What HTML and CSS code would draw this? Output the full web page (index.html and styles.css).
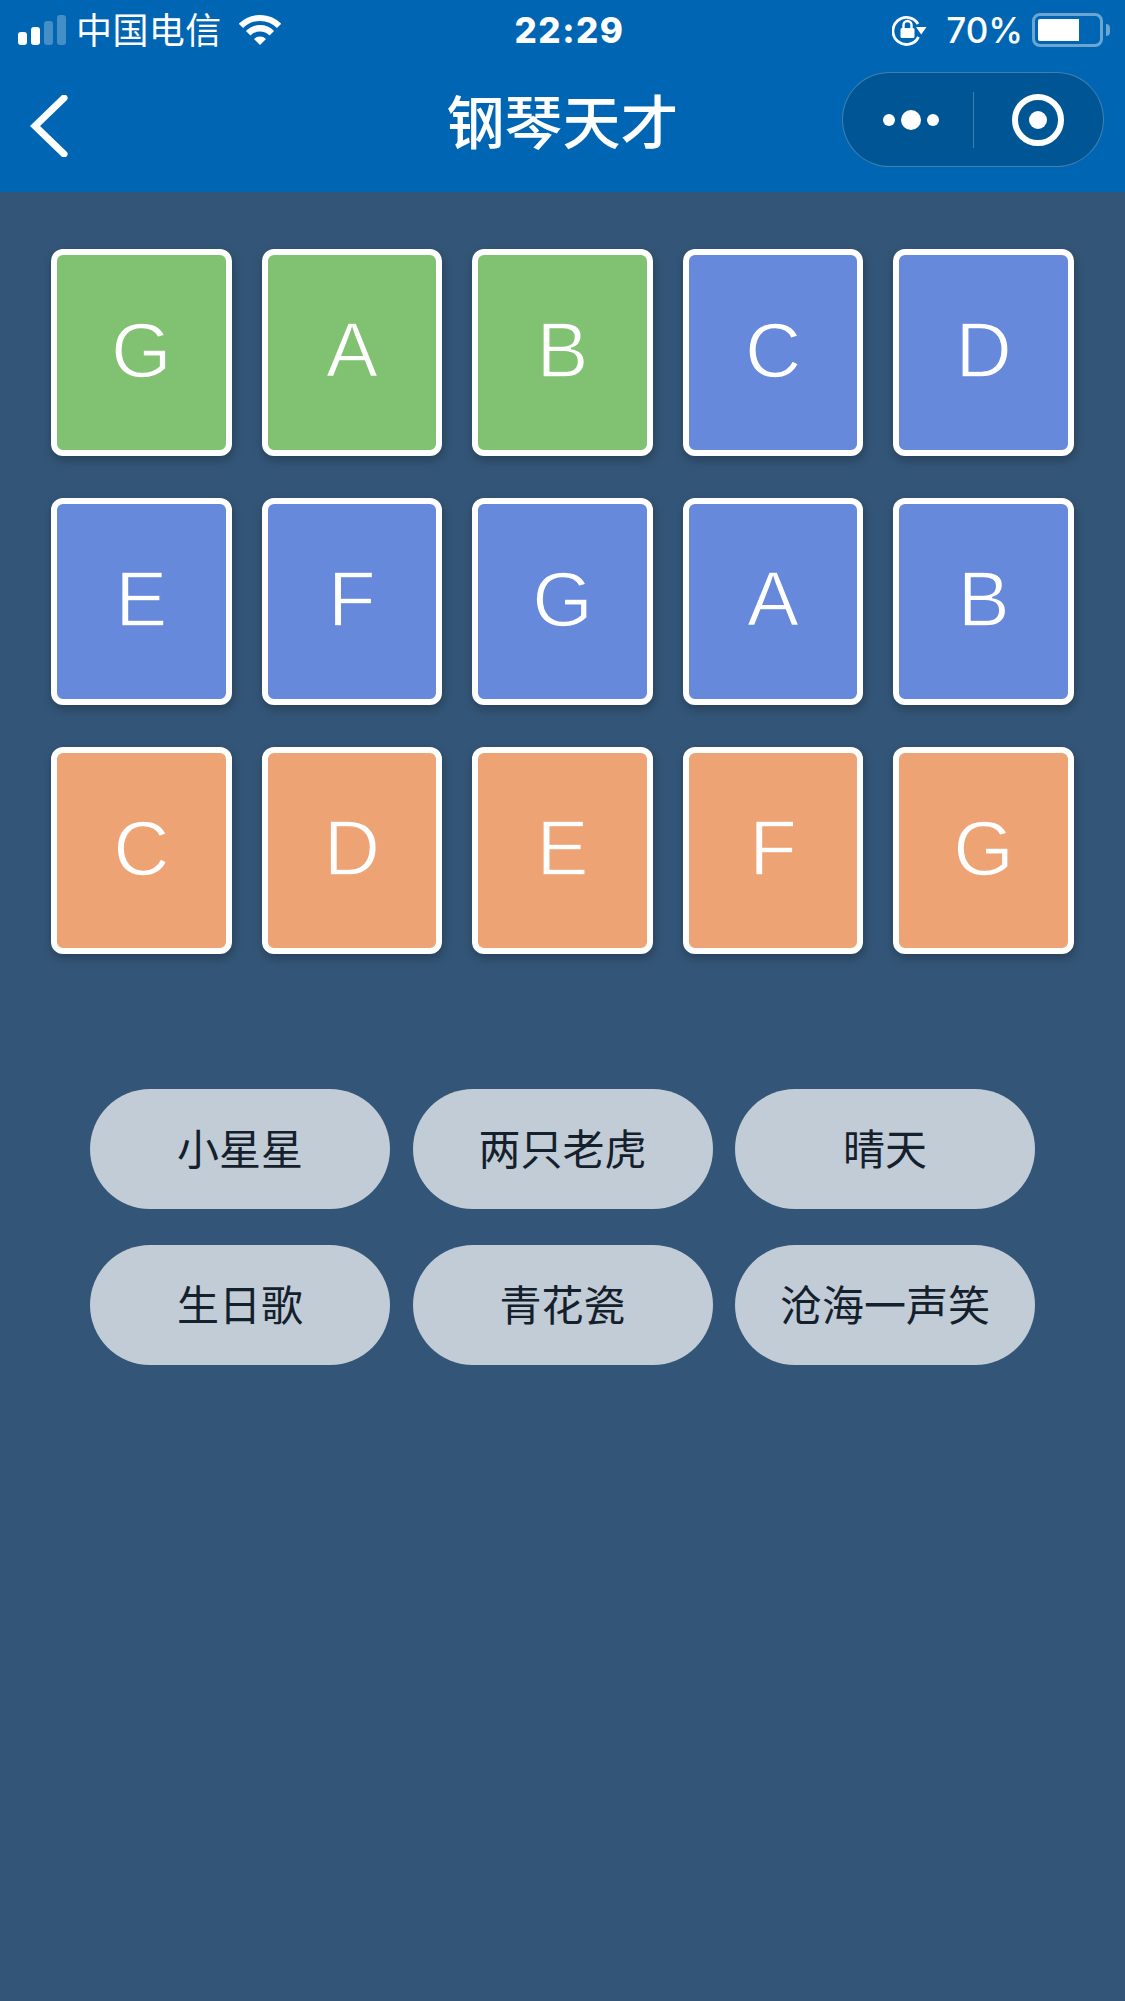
FILE: index.html
```html
<!DOCTYPE html>
<html lang="zh">
<head>
<meta charset="utf-8">
<title>钢琴天才</title>
<link rel="stylesheet" href="styles.css">
</head>
<body>
<header class="top">
  <div class="status">
    <div class="status-left">
      <svg class="signal" width="48" height="30" viewBox="0 0 48 30">
        <rect x="0" y="17" width="9" height="13" rx="3" fill="#fff"/>
        <rect x="13" y="12" width="9" height="18" rx="3" fill="#fff"/>
        <rect x="26" y="6" width="9" height="24" rx="3" fill="#fff" opacity=".27"/>
        <rect x="39" y="0" width="9" height="30" rx="3" fill="#fff" opacity=".27"/>
      </svg>
      <span class="carrier">中国电信</span>
      <svg class="wifi" width="42" height="30" viewBox="0 0 42 30">
        <path d="M15 24 A8.500 8.500 0 0 1 27 24 L21 30 Z" fill="#fff"/>
        <path d="M9.200 18.200 A16.700 16.700 0 0 1 32.800 18.200" fill="none" stroke="#fff" stroke-width="6.400"/>
        <path d="M1.900 10.900 A27 27 0 0 1 40.100 10.900" fill="none" stroke="#fff" stroke-width="6"/>
      </svg>
    </div>
    <div class="clock">22:29</div>
    <div class="status-right">
      <svg class="lock" width="36" height="32" viewBox="0 0 36 32">
        <path d="M26.500 23 A13.500 13.500 0 1 1 26 10" fill="none" stroke="#fff" stroke-width="2.800"/>
        <path d="M24 13 L34.500 13 L29.200 20.500 Z" fill="#fff"/>
        <rect x="8.500" y="14" width="14" height="10" rx="1.500" fill="#fff"/>
        <path d="M11.500 14 V11 A4 4 0 0 1 19.500 11 V14" fill="none" stroke="#fff" stroke-width="2.400"/>
      </svg>
      <span class="percent">70%</span>
      <div class="battery"><div class="battery-fill"></div></div>
    </div>
  </div>
  <nav class="nav">
    <svg class="back" width="38" height="62" viewBox="0 0 38 62">
      <path d="M34 3 L5 31 L34 59" fill="none" stroke="#fff" stroke-width="7" stroke-linecap="round" stroke-linejoin="miter"/>
    </svg>
    <h1 class="title">钢琴天才</h1>
    <div class="capsule">
      <div class="capsule-part">
        <svg class="capsule-dots" width="56" height="20" viewBox="0 0 56 20">
          <circle cx="6" cy="10" r="6" fill="#fff"/>
          <circle cx="28" cy="10" r="10" fill="#fff"/>
          <circle cx="50" cy="10" r="6" fill="#fff"/>
        </svg>
      </div>
      <div class="capsule-divider"></div>
      <div class="capsule-part">
        <svg width="52" height="52" viewBox="0 0 52 52">
          <circle cx="26" cy="26" r="23" fill="none" stroke="#fff" stroke-width="6"/>
          <circle cx="26" cy="26" r="9" fill="#fff"/>
        </svg>
      </div>
    </div>
  </nav>
</header>
<main class="page">
  <section class="keys">
    <div class="key green">G</div>
    <div class="key green">A</div>
    <div class="key green">B</div>
    <div class="key blue">C</div>
    <div class="key blue">D</div>
    <div class="key blue">E</div>
    <div class="key blue">F</div>
    <div class="key blue">G</div>
    <div class="key blue">A</div>
    <div class="key blue">B</div>
    <div class="key orange">C</div>
    <div class="key orange">D</div>
    <div class="key orange">E</div>
    <div class="key orange">F</div>
    <div class="key orange">G</div>
  </section>
  <section class="songs">
    <div class="song">小星星</div>
    <div class="song">两只老虎</div>
    <div class="song">晴天</div>
    <div class="song">生日歌</div>
    <div class="song">青花瓷</div>
    <div class="song">沧海一声笑</div>
  </section>
</main>
</body>
</html>
```
FILE: styles.css
```css
* { box-sizing: border-box; }
html, body { margin: 0; height: 100%; }
body {
  background: #335577;
  font-family: "Liberation Sans", "Noto Sans CJK SC", sans-serif;
  display: flex;
  flex-direction: column;
  overflow: hidden;
}
.top { background: #0066b3; color: #fff; height: 192px; flex: none; }
.status {
  height: 60px;
  padding: 0 15px 0 18px;
  display: grid;
  grid-template-columns: 1fr auto 1fr;
  align-items: center;
}
.status-left { display: flex; align-items: center; }
.carrier {
  font-family: "Noto Sans CJK SC", sans-serif;
  font-size: 36px;
  line-height: 56px;
  height: 60px;
  margin-left: 10px;
  letter-spacing: .4px;
}
.wifi { margin-left: 17px; }
.clock {
  font-family: "Inter", sans-serif;
  font-weight: 800;
  font-size: 35px;
  letter-spacing: 1.500px;
  line-height: 60px;
  margin-left: 11px;
}
.status-right { display: flex; align-items: center; justify-content: flex-end; }
.lock { flex: none; margin-right: 3px; }
.percent {
  font-family: "Inter", sans-serif;
  font-weight: 500;
  font-size: 35px;
  margin-left: 15px;
  line-height: 60px;
}
.battery {
  width: 71px;
  height: 34px;
  margin: 0 7px 0 9px;
  border: 3px solid rgba(255, 255, 255, .42);
  border-radius: 8px;
  padding: 3px;
  position: relative;
}
.battery::after {
  content: "";
  position: absolute;
  right: -10px;
  top: 8px;
  width: 4px;
  height: 12px;
  background: rgba(255, 255, 255, .42);
  border-radius: 0 4px 4px 0;
}
.battery-fill { width: 41px; height: 100%; background: #fff; border-radius: 2px 0 0 2px; }
.nav {
  height: 132px;
  padding: 12px 21px 25px;
  display: grid;
  grid-template-columns: 1fr auto 1fr;
  align-items: center;
}
.back { display: block; margin: 12px 0 0 9px; }
.title {
  margin: 0 0 2px;
  font-family: "Noto Sans CJK SC", sans-serif;
  font-weight: 500;
  font-size: 58px;
  line-height: 80px;
  text-align: center;
}
.capsule {
  justify-self: end;
  width: 262px;
  height: 95px;
  background: #005694;
  border: 1.500px solid rgba(255, 255, 255, .25);
  border-radius: 48px;
  display: flex;
  align-items: center;
}
.capsule-part { flex: 1; display: flex; align-items: center; justify-content: center; }
.capsule-part svg { display: block; }
.capsule-dots { margin-left: 7px; }
.capsule-divider { width: 1px; height: 56px; background: rgba(255, 255, 255, .25); flex: none; }
.page { flex: 1; padding: 57px 51px 0; }
.keys {
  display: grid;
  grid-template-columns: repeat(5, 1fr);
  column-gap: 30px;
  row-gap: 42px;
}
.key {
  height: 207px;
  border: 6px solid #fff;
  border-radius: 12px;
  box-shadow: 1px 4px 10px rgba(0, 0, 0, .25);
  color: #fff;
  font-size: 78px;
  padding-bottom: 5px;
  display: flex;
  align-items: center;
  justify-content: center;
}
.green { background: #80c271; -webkit-text-stroke: 1.400px #80c271; }
.blue { background: #6689dc; -webkit-text-stroke: 1.400px #6689dc; }
.orange { background: #eea375; -webkit-text-stroke: 1.400px #eea375; }
.songs {
  margin: 135px 39px 0;
  display: grid;
  grid-template-columns: repeat(3, 300px);
  justify-content: space-between;
  row-gap: 36px;
}
.song {
  height: 120px;
  border-radius: 60px;
  background: #c2ccd7;
  color: #14202c;
  font-family: "Noto Sans CJK SC", sans-serif;
  font-size: 42px;
  padding-bottom: 5px;
  display: flex;
  align-items: center;
  justify-content: center;
}
```
